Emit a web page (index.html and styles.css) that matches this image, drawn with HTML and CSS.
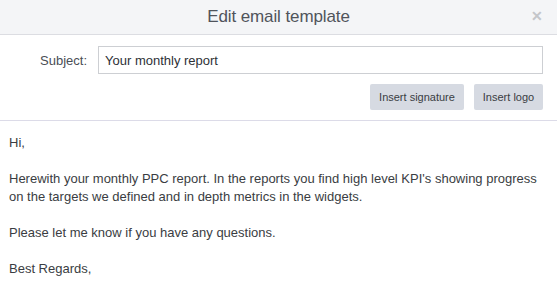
FILE: index.html
```html
<!DOCTYPE html>
<html>
<head>
<meta charset="utf-8">
<link rel="stylesheet" href="styles.css">
</head>
<body>
<div class="modal">
  <div class="modal-header">
    <h1 class="title">Edit email template</h1>
    <span class="close">&#x2715;</span>
  </div>
  <div class="form">
    <div class="row">
      <label class="label">Subject:</label>
      <input class="input" type="text" value="Your monthly report">
    </div>
    <div class="actions">
      <button class="btn btn-sig">Insert signature</button>
      <button class="btn btn-logo">Insert logo</button>
    </div>
  </div>
  <div class="editor">
    <p>Hi,</p>
    <p><br></p>
    <p>Herewith your monthly PPC report. In the reports you find high level KPI's showing progress on the targets we defined and in depth metrics in the widgets.</p>
    <p><br></p>
    <p>Please let me know if you have any questions.</p>
    <p><br></p>
    <p>Best Regards,</p>
  </div>
</div>
</body>
</html>
```
FILE: styles.css
```css
html, body {
  margin: 0;
  padding: 0;
  background: #ffffff;
}
body {
  font-family: "Liberation Sans", Arial, sans-serif;
  color: #3a3d42;
}
.modal {
  width: 557px;
  height: 282px;
  overflow: hidden;
}
.modal-header {
  position: relative;
  height: 34px;
  background: #f4f5f7;
  border-bottom: 1px solid #dcdde2;
  display: flex;
  align-items: center;
  justify-content: center;
}
.title {
  margin: 0;
  font-size: 17px;
  font-weight: normal;
  color: #50545b;
  letter-spacing: -0.1px;
}
.close {
  position: absolute;
  right: 14px;
  top: 8px;
  font-size: 14px;
  font-weight: bold;
  color: #c4c6ca;
}
.form {
  padding: 11px 14px 10px 0;
  border-bottom: 1px solid #dcdbe8;
}
.row {
  display: flex;
  align-items: center;
}
.label {
  width: 98px;
  text-align: right;
  font-size: 13px;
  color: #4a4e55;
  padding-right: 11px;
  box-sizing: border-box;
}
.input {
  flex: 1;
  height: 28px;
  box-sizing: border-box;
  border: 1px solid #cdcfd3;
  border-radius: 0;
  padding: 0 6px;
  font-family: "Liberation Sans", Arial, sans-serif;
  font-size: 13px;
  color: #2e3136;
  outline: none;
}
.actions {
  display: flex;
  justify-content: flex-end;
  gap: 10px;
  margin-top: 10px;
}
.btn {
  height: 26px;
  border: none;
  border-radius: 2px;
  background: #d6dae2;
  color: #3a3d42;
  font-family: "Liberation Sans", Arial, sans-serif;
  font-size: 11px;
  padding: 0 8px;
}
.btn-sig {
  width: 94px;
}
.btn-logo {
  width: 69px;
}
.editor {
  padding: 13px 14px 0 9px;
  font-size: 13px;
  line-height: 18px;
  color: #3a3d42;
}
.editor p {
  margin: 0;
}
```
